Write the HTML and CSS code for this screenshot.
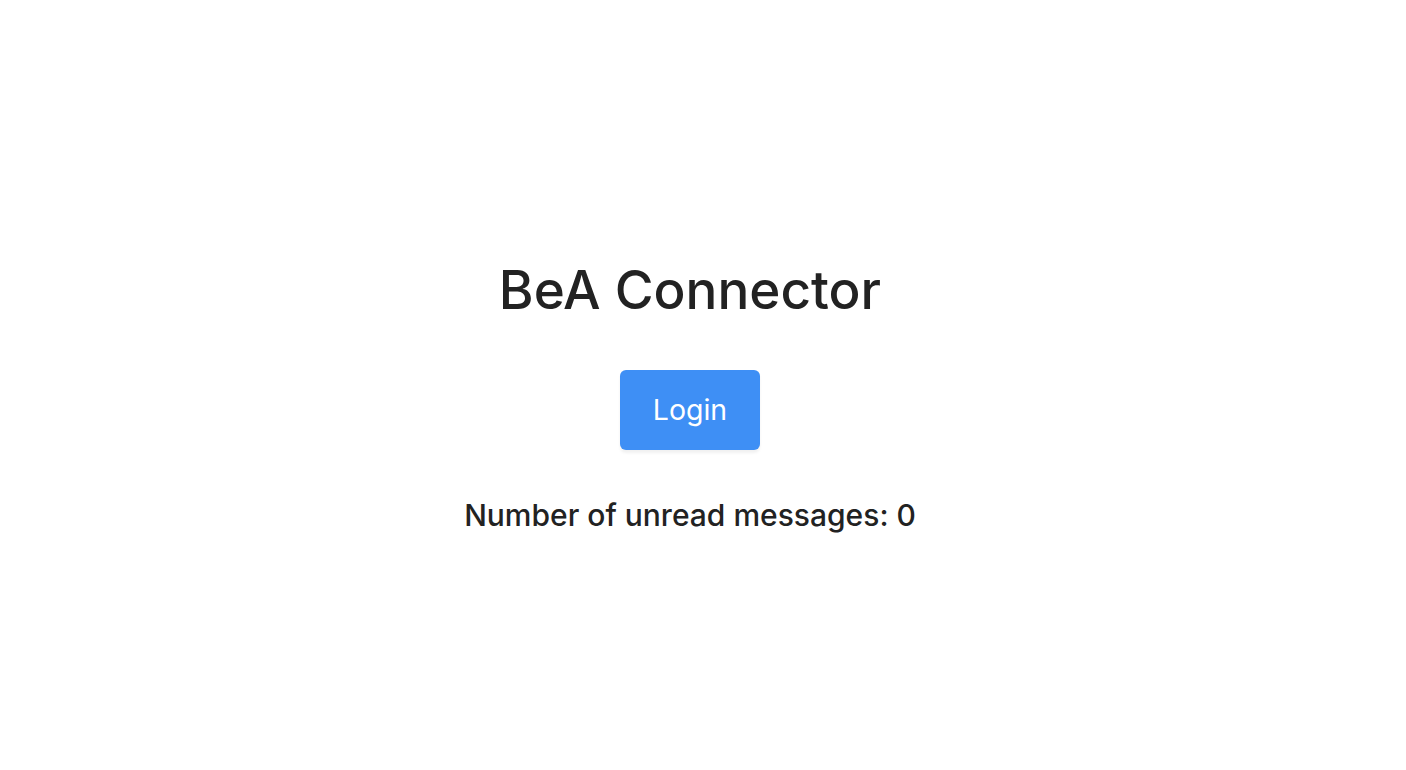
FILE: index.html
```html
<!DOCTYPE html>
<html lang="en">
<head>
    <meta charset="UTF-8">
    <meta name="viewport" content="width=device-width, initial-scale=1.0">
    <title>BeA Connector</title>
    <link rel="stylesheet" href="styles.css">
</head>
<body>
    <div class="app">
        <h1>BeA Connector</h1>
        <button id="login">Login</button>
        <p class="unread">Number of unread messages: <span id="unreadCount">0</span></p>
    </div>
</body>
</html>
```

FILE: styles.css
```css
body {
    font-family: Inter, "Noto Sans", sans-serif;
    background-color: #fff;
    color: #222;
    margin: 0;
}
.app {
    height: 770px;
    box-sizing: border-box;
    padding-right: 26px;
    display: flex;
    flex-direction: column;
    align-items: center;
    justify-content: center;
    padding-top: 20px;
}
h1 {
    font-size: 53px;
    font-weight: 500;
    margin: 0 0 48px;
}
button {
    width: 140px;
    height: 80px;
    background-color: #3e8ff5;
    color: #fff;
    font-family: inherit;
    font-size: 28.5px;
    border: none;
    border-radius: 6px;
    box-shadow: 0 3px 3px rgba(0, 0, 0, 0.06);
    cursor: pointer;
}
.unread {
    font-size: 30px;
    font-weight: 500;
    margin: 47px 0 0;
}
```
